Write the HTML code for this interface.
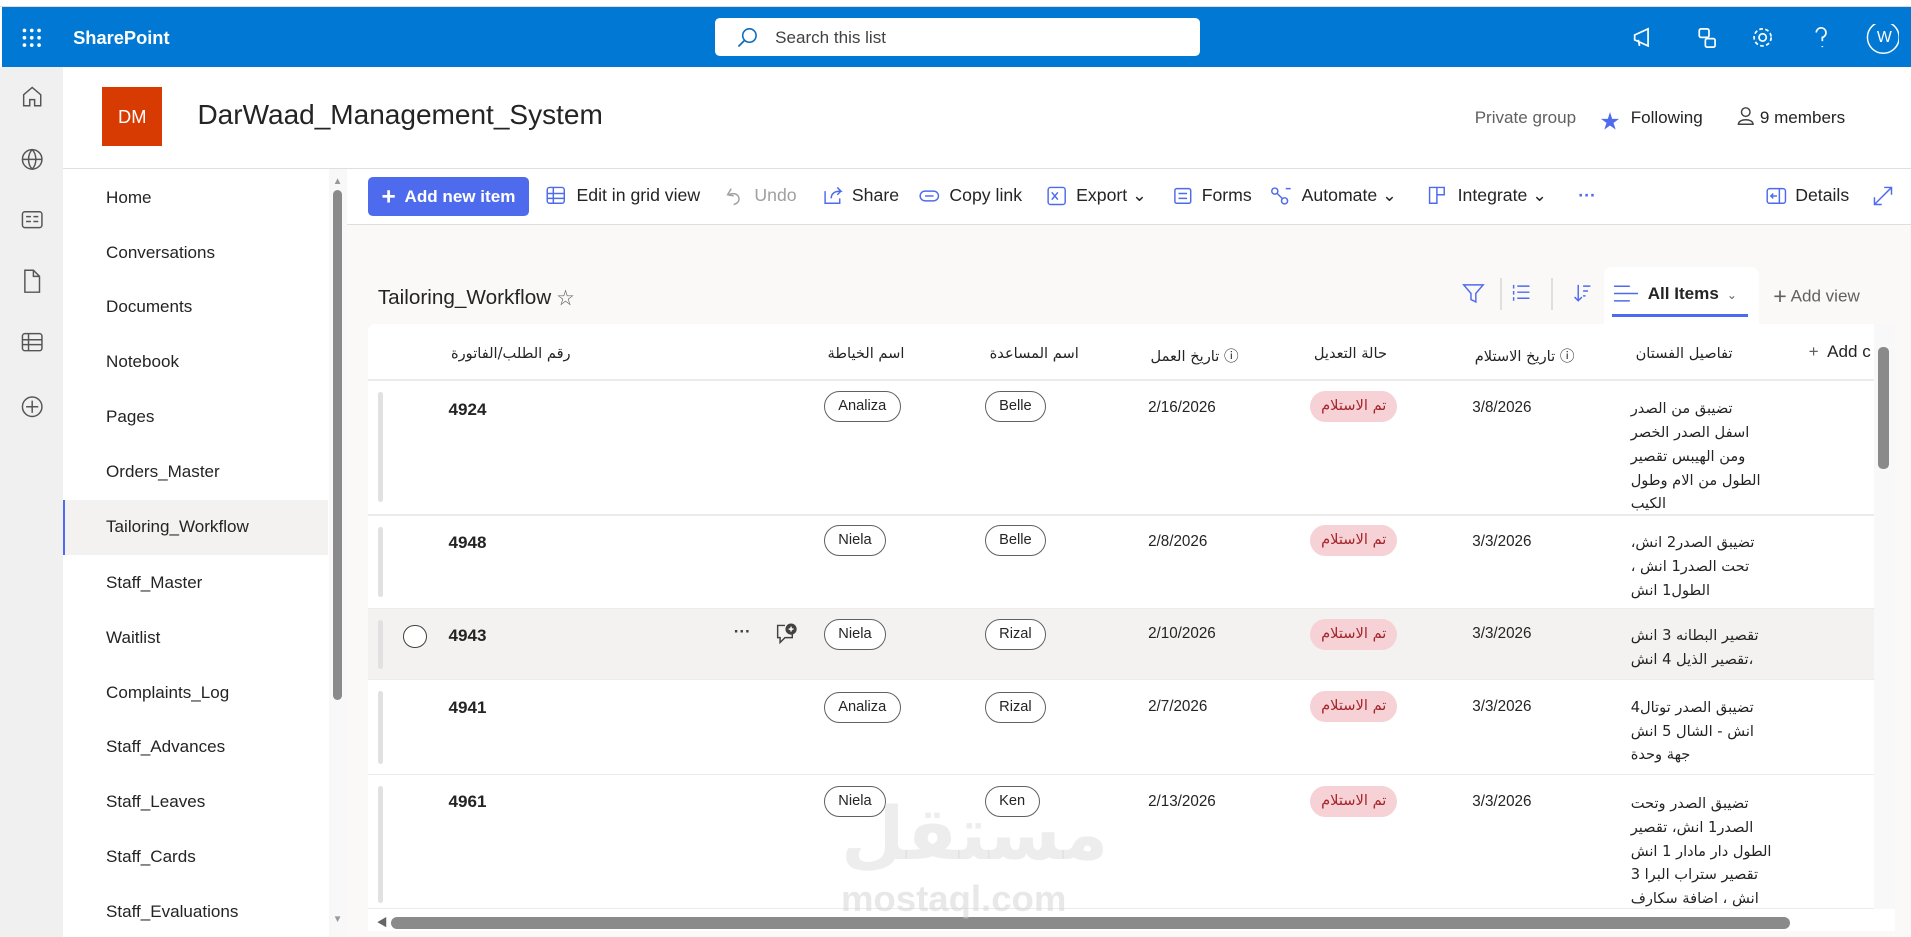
<!DOCTYPE html>
<html><head><meta charset="utf-8"><style>
*{box-sizing:border-box;margin:0;padding:0}
html,body{width:1911px;height:937px;overflow:hidden;background:#fff}
#w{position:relative;width:1568px;height:769px;zoom:1.21875;font-family:"Liberation Sans","Noto Sans CJK SC",sans-serif;color:#242424;font-size:14px;overflow:hidden}
.a{position:absolute}
.nav div{position:absolute;left:87px;font-size:14px;color:#242424}
.cmd{position:absolute;top:152px;font-size:14.5px;color:#242424;white-space:nowrap}
.pill{position:absolute;height:25px;border:1px solid #616161;border-radius:13px;font-size:12px;line-height:23px;padding:0 11px;background:#fff}
.st{position:absolute;height:25px;border-radius:13px;background:#f6d1d5;color:#a4262c;font-size:12px;line-height:25px;padding:0 9px;font-family:"DejaVu Sans",sans-serif}
.num{position:absolute;left:368px;font-weight:bold;font-size:14px}
.dt{position:absolute;font-size:12.5px}
.det{position:absolute;left:1338px;width:118px;font-size:12px;line-height:19.5px;direction:rtl;text-align:left;font-family:"DejaVu Sans",sans-serif}
.rb{position:absolute;left:310px;width:4px;background:#e1e1e1;border-radius:2px}
.hd{position:absolute;top:283px;font-size:12px;font-family:"DejaVu Sans",sans-serif;direction:rtl;color:#242424}
.hr{position:absolute;left:302px;width:1236px;height:1px;background:#edebe9}
</style></head><body><div id="w">
<div class="a" style="left:0;top:0;width:1568px;height:6px;background:#fff;border-bottom:1px solid #ddd"></div>
<div class="a" style="left:2px;top:6px;width:1566px;height:49px;background:#0078d4"></div>
<svg class="a" style="left:18px;top:23px" width="16" height="16"><g fill="#fff"><circle cx="2" cy="2" r="1.5"/><circle cx="8" cy="2" r="1.5"/><circle cx="14" cy="2" r="1.5"/><circle cx="2" cy="8" r="1.5"/><circle cx="8" cy="8" r="1.5"/><circle cx="14" cy="8" r="1.5"/><circle cx="2" cy="14" r="1.5"/><circle cx="8" cy="14" r="1.5"/><circle cx="14" cy="14" r="1.5"/></g></svg>
<div class="a" style="left:60px;top:22px;color:#fff;font-weight:bold;font-size:15px">SharePoint</div>
<div class="a" style="left:587px;top:15px;width:398px;height:31px;background:#fff;border-radius:4px"></div>
<svg class="a" style="left:604px;top:22px" width="18" height="18"><circle cx="11" cy="7" r="5.5" fill="none" stroke="#0f6cbd" stroke-width="1.3"/><path d="M7 11 L2 16" stroke="#0f6cbd" stroke-width="1.4"/></svg>
<div class="a" style="left:636px;top:23px;font-size:14px;color:#424242">Search this list</div>
<svg class="a" style="left:1338px;top:20px" width="220" height="24" fill="none" stroke="#fff" stroke-width="1.4">
<path d="M3 9 L14 4 V18 L3 13 Z M6 13 L7 18"/>
<rect x="56" y="4" width="8" height="7" rx="1.5"/><rect x="61" y="12" width="8" height="7" rx="1.5"/>
<circle cx="108" cy="11" r="3"/><circle cx="108" cy="11" r="7" stroke-dasharray="3 2"/>
<path d="M152 7 a4 4 0 1 1 5 4 v3 M157 18 v1"/>
<circle cx="207" cy="11" r="13" stroke-width="1.2"/>
</svg>
<div class="a" style="left:1540px;top:24px;color:#fff;font-size:13px">W</div>
<div class="a" style="left:0;top:55px;width:52px;height:714px;background:#f0f0f0"></div>
<svg class="a" style="left:16px;top:70px" width="22" height="280" fill="none" stroke="#555" stroke-width="1.2">
<path d="M3 17 V8 L10 2 L17 8 V17 H12 V12 H8 V17 Z"/>
<circle cx="10" cy="61" r="8"/><path d="M2 61 H18 M10 53 C6 57 6 65 10 69 C14 65 14 57 10 53"/>
<rect x="2" y="104" width="16" height="13" rx="2"/><path d="M5 108 H9 M5 112 H9 M11 108 H15 M11 112 H15"/>
<path d="M4 152 V170 H16 V157 L11 152 Z M11 152 V157 H16"/>
<rect x="2" y="204" width="16" height="14" rx="2"/><path d="M2 209 H18 M2 213 H18 M7 204 V218"/>
<circle cx="10" cy="264" r="8"/><path d="M10 259 V269 M5 264 H15"/>
</svg>
<div class="a" style="left:84px;top:71px;width:49px;height:49px;background:#d83b01;color:#fff;font-size:15px;text-align:center;line-height:49px">DM</div>
<div class="a" style="left:162px;top:81px;font-size:23px;color:#242424">DarWaad_Management_System</div>
<div class="a" style="left:1210px;top:89px;font-size:14px;color:#616161">Private group</div>
<div class="a" style="left:1313px;top:86px;font-size:16px;color:#4f6bed">★</div>
<div class="a" style="left:1338px;top:89px;font-size:14px">Following</div>
<svg class="a" style="left:1424px;top:87px" width="16" height="18" fill="none" stroke="#424242" stroke-width="1.2"><circle cx="8" cy="5" r="3.5"/><path d="M2 15 C2 10 14 10 14 15 Z"/></svg>
<div class="a" style="left:1444px;top:89px;font-size:14px">9 members</div>
<div class="a" style="left:52px;top:138px;width:1516px;height:1px;background:#e1dfdd"></div>
<div class="nav">
<div style="top:154px">Home</div><div style="top:199px">Conversations</div><div style="top:244px">Documents</div><div style="top:289px">Notebook</div><div style="top:334px">Pages</div><div style="top:379px">Orders_Master</div>
<div style="top:410px;left:52px;width:217px;height:45px;background:#f3f2f1;border-left:2px solid #4f6bed"></div>
<div style="top:424px">Tailoring_Workflow</div>
<div style="top:470px">Staff_Master</div><div style="top:515px">Waitlist</div><div style="top:560px">Complaints_Log</div><div style="top:605px">Staff_Advances</div><div style="top:650px">Staff_Leaves</div><div style="top:695px">Staff_Cards</div><div style="top:740px">Staff_Evaluations</div>
</div>
<div class="a" style="left:270px;top:139px;width:15px;height:630px;background:#f8f8f8"></div>
<div class="a" style="left:273px;top:156px;width:8px;height:418px;background:#8a8a8a;border-radius:4px"></div>
<div class="a" style="left:273px;top:144px;font-size:8px;color:#999">▲</div>
<div class="a" style="left:273px;top:750px;font-size:8px;color:#999">▼</div>
<div class="a" style="left:285px;top:139px;width:1283px;height:630px;background:#faf9f8"></div>
<div class="a" style="left:285px;top:139px;width:1283px;height:46px;background:#fff;border-bottom:1px solid #e1dfdd"></div>
<div class="a" style="left:302px;top:145px;width:132px;height:32px;background:#4f6bed;border-radius:4px;color:#fff;font-weight:bold;font-size:14px;line-height:32px;padding-left:11px"><span style="font-size:20px;vertical-align:-2px">+</span>&nbsp; Add new item</div>
<svg class="a" style="left:448px;top:152px" width="1100" height="18" fill="none" stroke="#4f6bed" stroke-width="1.2">
<rect x="1" y="2" width="14" height="13" rx="2"/><path d="M1 7 H15 M1 11 H15 M6 2 V15"/>
<path d="M152 3 L149 8 L154 9 M150 8 C158 4 162 14 154 16" stroke="#a0a0a0"/>
<path d="M229 5 V15 H241 V11 M234 11 C234 6 238 5 242 5 L239 2 M242 5 L239 8"/>
<rect x="307" y="5" width="15" height="8" rx="4"/><path d="M311 9 H318"/>
<rect x="412" y="2" width="14" height="14" rx="2"/><path d="M415 6 L420 12 M420 6 L415 12"/>
<rect x="516" y="3" width="13" height="12" rx="1.5"/><path d="M519 7 H526 M519 11 H526"/>
<circle cx="598" cy="5" r="2.5"/><circle cx="606" cy="13" r="2.5"/><path d="M600 7 L604 11 M607 3 H611"/>
<path d="M725 2 H737 V8 H731 V15 H725 Z M731 2 V8"/>
<rect x="1002" y="3" width="15" height="12" rx="2"/><path d="M1012 3 V15 M1005 9 H1010 M1007 7 L1005 9 L1007 11"/>
</svg>
<div class="cmd" style="left:473px">Edit in grid view</div>
<div class="cmd" style="left:619px;color:#a0a0a0">Undo</div>
<div class="cmd" style="left:699px">Share</div>
<div class="cmd" style="left:779px">Copy link</div>
<div class="cmd" style="left:883px">Export ⌄</div>
<div class="cmd" style="left:986px">Forms</div>
<div class="cmd" style="left:1068px">Automate ⌄</div>
<div class="cmd" style="left:1196px">Integrate ⌄</div>
<div class="cmd" style="left:1295px;color:#4f6bed;font-weight:bold">···</div>
<div class="cmd" style="left:1473px">Details</div>
<svg class="a" style="left:1536px;top:152px" width="18" height="18" fill="none" stroke="#4f6bed" stroke-width="1.2"><path d="M2 16 L16 2 M10 2 H16 V8 M2 10 V16 H8"/></svg>
<div class="a" style="left:310px;top:233px;font-size:17px">Tailoring_Workflow <span style="font-size:14px;color:#616161">☆</span></div>
<svg class="a" style="left:1198px;top:230px" width="110" height="22" fill="none" stroke="#4f6bed" stroke-width="1.2">
<path d="M3 4 H19 L13 11 V18 L9 16 V11 Z"/>
<path d="M47 5 H57 M47 10 H57 M47 15 H57 M44 4 V7 M44 9 V12 M44 14 V17" />
<path d="M97 4 V17 M94 14 L97 17 L100 14 M101 5 H107 M101 9 H105 M101 13 H103"/>
</svg>
<div class="a" style="left:1231px;top:228px;width:1px;height:26px;background:#e1dfdd"></div>
<div class="a" style="left:1273px;top:228px;width:1px;height:26px;background:#e1dfdd"></div>
<div class="a" style="left:1316px;top:219px;width:127px;height:48px;background:#fff;border-radius:6px 6px 0 0"></div>
<svg class="a" style="left:1324px;top:234px" width="20" height="14" stroke="#4f6bed" stroke-width="1.2"><path d="M0 1 H13 M0 7 H20 M0 13 H13"/></svg>
<div class="a" style="left:1352px;top:233px;font-size:14px;font-weight:bold">All Items <span style="font-weight:normal;font-size:10px;color:#616161">&nbsp;⌄</span></div>
<div class="a" style="left:1323px;top:258px;width:111px;height:2px;background:#4f6bed"></div>
<div class="a" style="left:1455px;top:232px;font-size:14px;color:#616161"><span style="font-size:19px;font-weight:300;vertical-align:-2px">+</span> Add view</div>
<div class="a" style="left:302px;top:266px;width:1253px;height:494px;background:#fff;border-radius:6px 6px 0 0"></div>
<div class="hd" style="left:370px">رقم الطلب/الفاتورة</div>
<div class="hd" style="left:679px">اسم الخياطة</div>
<div class="hd" style="left:812px">اسم المساعدة</div>
<div class="hd" style="left:944px">ⓘ تاريخ العمل</div>
<div class="hd" style="left:1078px">حالة التعديل</div>
<div class="hd" style="left:1210px">ⓘ تاريخ الاستلام</div>
<div class="hd" style="left:1342px">تفاصيل الفستان</div>
<div class="a" style="left:1484px;top:281px;font-size:14px;white-space:nowrap"><span style="color:#616161">+</span>&nbsp; Add c</div>
<div class="a" style="left:302px;top:311px;width:1236px;height:2px;background:#edebe9"></div>
<div class="a" style="left:302px;top:499px;width:1236px;height:58px;background:#f3f2f1"></div>
<div class="hr" style="top:422px"></div><div class="hr" style="top:499px"></div><div class="hr" style="top:557px"></div><div class="hr" style="top:635px"></div><div class="hr" style="top:745px"></div>
<div class="rb" style="top:322px;height:90px"></div><div class="rb" style="top:432px;height:58px"></div><div class="rb" style="top:509px;height:40px"></div><div class="rb" style="top:567px;height:60px"></div><div class="rb" style="top:645px;height:96px"></div>
<div class="num" style="top:328px">4924</div><div class="num" style="top:437px">4948</div><div class="num" style="top:514px">4943</div><div class="num" style="top:573px">4941</div><div class="num" style="top:650px">4961</div>
<div class="a" style="left:331px;top:513px;width:19px;height:19px;border:1px solid #424242;border-radius:50%;background:#fff"></div>
<div class="a" style="left:602px;top:510px;font-size:14px;font-weight:bold;color:#424242">···</div>
<svg class="a" style="left:635px;top:511px" width="20" height="18" fill="none" stroke="#424242" stroke-width="1.2"><path d="M9 2 H3 V12 H5 V16 L9 12 H15 V9"/><circle cx="14" cy="5" r="4" fill="#424242"/><path d="M14 3 V7 M12 5 H16" stroke="#fff"/></svg>
<div class="pill" style="left:676px;top:321px">Analiza</div><div class="pill" style="left:676px;top:431px">Niela</div><div class="pill" style="left:676px;top:508px">Niela</div><div class="pill" style="left:676px;top:568px">Analiza</div><div class="pill" style="left:676px;top:645px">Niela</div>
<div class="pill" style="left:808px;top:321px">Belle</div><div class="pill" style="left:808px;top:431px">Belle</div><div class="pill" style="left:808px;top:508px">Rizal</div><div class="pill" style="left:808px;top:568px">Rizal</div><div class="pill" style="left:808px;top:645px">Ken</div>
<div class="dt" style="left:942px;top:327px">2/16/2026</div><div class="dt" style="left:942px;top:437px">2/8/2026</div><div class="dt" style="left:942px;top:513px">2/10/2026</div><div class="dt" style="left:942px;top:573px">2/7/2026</div><div class="dt" style="left:942px;top:651px">2/13/2026</div>
<div class="st" style="left:1075px;top:321px">تم الاستلام</div><div class="st" style="left:1075px;top:431px">تم الاستلام</div><div class="st" style="left:1075px;top:508px">تم الاستلام</div><div class="st" style="left:1075px;top:567px">تم الاستلام</div><div class="st" style="left:1075px;top:645px">تم الاستلام</div>
<div class="dt" style="left:1208px;top:327px">3/8/2026</div><div class="dt" style="left:1208px;top:437px">3/3/2026</div><div class="dt" style="left:1208px;top:513px">3/3/2026</div><div class="dt" style="left:1208px;top:573px">3/3/2026</div><div class="dt" style="left:1208px;top:651px">3/3/2026</div>
<div class="det" style="top:326px">تضيبق من الصدر<br>اسفل الصدر الخصر<br>ومن الهيبس تقصير<br>الطول من الام وطول<br>الكيب</div>
<div class="det" style="top:436px">تضيبق الصدر2 انش،<br>تحت الصدر1 انش ،<br>الطول1 انش</div>
<div class="det" style="top:512px">تقصير البطانه 3 انش<br>،تقصير الذيل 4 انش</div>
<div class="det" style="top:571px">تضيبق الصدر توتال4<br>انش - الشال 5 انش<br>جهة وحدة</div>
<div class="det" style="top:650px">تضيبق الصدر وتحت<br>الصدر1 انش، تقصير<br>الطول دار مادار 1 انش<br>تقصير ستراب البرا 3<br>انش ، اضافة سكارف</div>
<div class="a" style="left:1538px;top:266px;width:17px;height:494px;background:#f8f8f8"></div>
<div class="a" style="left:1541px;top:285px;width:9px;height:100px;background:#8a8a8a;border-radius:4px"></div>
<div class="a" style="left:302px;top:746px;width:1253px;height:18px;background:#fff"></div>
<div class="a" style="left:321px;top:752px;width:1148px;height:10px;background:#8a8a8a;border-radius:5px"></div>
<div class="a" style="left:309px;top:750px;font-size:9px;color:#666">◀</div>
<div class="a" style="left:690px;top:650px;font-size:60px;font-weight:bold;color:rgba(210,210,210,.4);direction:rtl;font-family:'DejaVu Sans',sans-serif">مستقل</div>
<div class="a" style="left:690px;top:720px;font-size:30px;font-weight:bold;color:rgba(210,210,210,.5)">mostaql.com</div>
</div></body></html>
